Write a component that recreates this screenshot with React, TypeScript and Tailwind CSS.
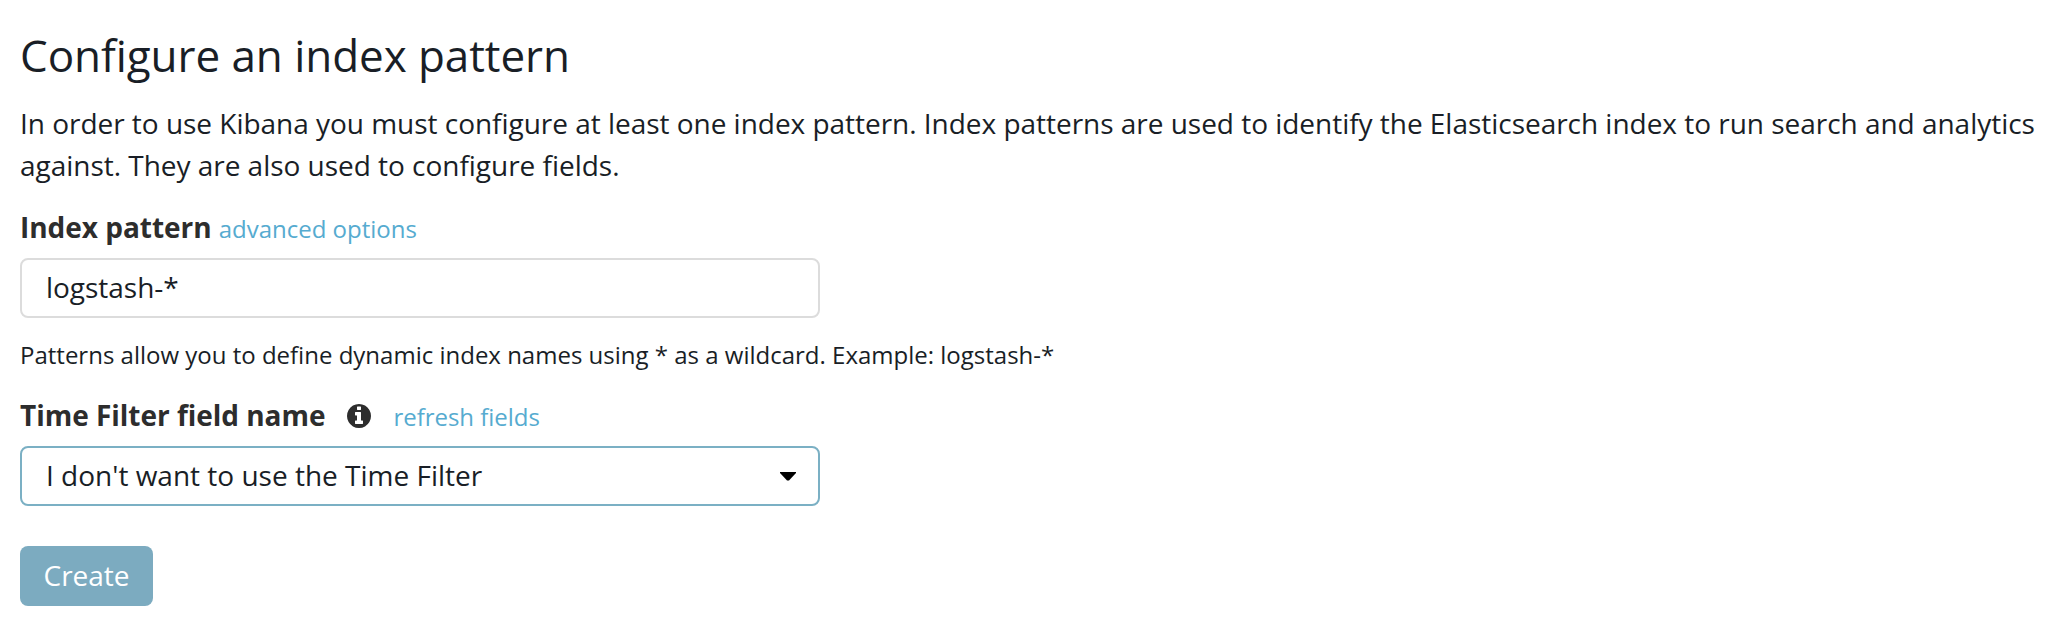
import React from "react";

function InfoIcon() {
  return (
    <svg className="h-6 w-6" viewBox="0 0 1536 1536" fill="#2d2d2d">
      <path d="M1024 1248v-160q0-14-9-23t-23-9h-96V544q0-14-9-23t-23-9H544q-14 0-23 9t-9 23v160q0 14 9 23t23 9h96v320h-96q-14 0-23 9t-9 23v160q0 14 9 23t23 9h448q14 0 23-9t9-23zM896 352V192q0-14-9-23t-23-9H672q-14 0-23 9t-9 23v160q0 14 9 23t23 9h192q14 0 23-9t9-23zm640 416q0 209-103 385.500T1153.500 1433 768 1536t-385.500-103T103 1153.500 0 768t103-385.500T382.500 103 768 0t385.500 103T1433 382.500 1536 768z" />
    </svg>
  );
}

export default function App() {
  return (
    <main className="h-[638px] w-full bg-white px-5 pt-[33px] font-['Open_Sans',sans-serif] text-[28px] leading-[42px] tracking-[-0.028px] text-[#191e26]">
      <h1 className="text-[44px] leading-[44px] tracking-[-0.06px]">Configure an index pattern</h1>
      <p className="mt-[25px] w-[2030px]">
        In order to use Kibana you must configure at least one index pattern. Index patterns are used to identify the
        Elasticsearch index to run search and analytics against. They are also used to configure fields.
      </p>
      <form>
        <div className="mt-5 flex h-[42px] items-baseline gap-[7px]">
          <label className="font-bold text-[#2d2d2d]">Index pattern</label>
          <a className="text-[24px] tracking-normal text-[#56abd0]">advanced options</a>
        </div>
        <div className="mt-2.5 flex h-[60px] w-[800px] items-center rounded-lg border-2 border-[#dcdcdc] px-6 pb-0.5">logstash-*</div>
        <p className="mt-4 text-[24px] tracking-normal">Patterns allow you to define dynamic index names using * as a wildcard. Example: logstash-*</p>
        <div className="mt-[18px] flex h-[42px] items-baseline">
          <label className="font-bold text-[#2d2d2d]">Time Filter field name</label>
          <span className="mr-[22px] ml-[22px] self-center pt-0.5"><InfoIcon /></span>
          <a className="text-[24px] text-[#56abd0]">refresh fields</a>
        </div>
        <div className="mt-2.5 flex h-[60px] w-[800px] items-center justify-between rounded-lg border-2 border-[#7bb0c4] pr-[22px] pl-6">
          <span className="pb-0.5 tracking-normal">I don't want to use the Time Filter</span>
          <svg className="h-[9px] w-4" viewBox="0 0 16 9"><path d="M0 0h16v1L9 8.500H7L0 1z" fill="#000" /></svg>
        </div>
        <button type="button" className="mt-10 block h-[60px] w-[133px] rounded-lg bg-[#7cabc0] pb-0.5 text-white">Create</button>
      </form>
    </main>
  );
}
